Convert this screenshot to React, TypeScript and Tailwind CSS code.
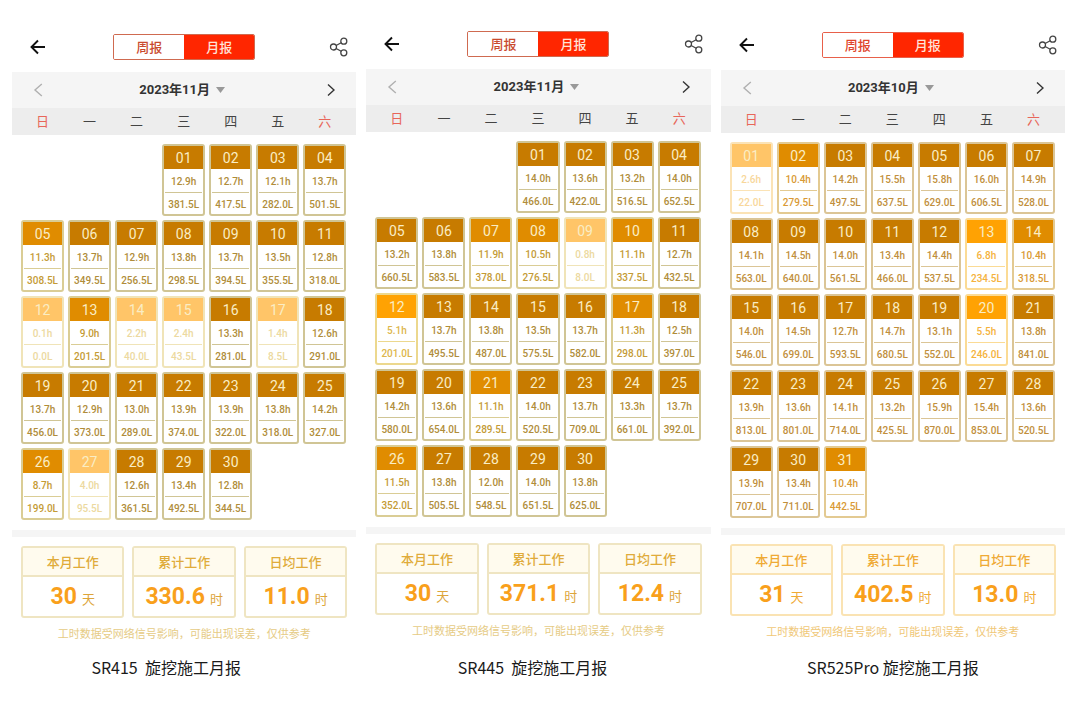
import clsx from 'clsx';

type Tone = 'olive' | 'amber';

interface DayRecord {
  hours: string;
  fuel: string;
}

interface Report {
  id: string;
  month: string;
  firstWeekday: number;
  days: DayRecord[];
  totals: { label: string; value: string; unit: string }[];
  caption: string;
  tone: Tone;
  topClass: string;
  captionClass: string;
}

const WEEKDAYS = ['日', '一', '二', '三', '四', '五', '六'];

// "hours/litres" per day, in calendar order
function parseDays(source: string): DayRecord[] {
  return source
    .trim()
    .split(/\s+/)
    .map((entry) => {
      const [hours, fuel] = entry.split('/');
      return { hours, fuel };
    });
}

function getTotals(days: string, total: string, average: string) {
  return [
    { label: '本月工作', value: days, unit: '天' },
    { label: '累计工作', value: total, unit: '时' },
    { label: '日均工作', value: average, unit: '时' },
  ];
}

const REPORTS: Report[] = [
  {
    id: 'sr415',
    month: '2023年11月',
    firstWeekday: 3,
    days: parseDays(`
      12.9/381.5 12.7/417.5 12.1/282.0 13.7/501.5
      11.3/308.5 13.7/349.5 12.9/256.5 13.8/298.5 13.7/394.5 13.5/355.5 12.8/318.0
      0.1/0.0 9.0/201.5 2.2/40.0 2.4/43.5 13.3/281.0 1.4/8.5 12.6/291.0
      13.7/456.0 12.9/373.0 13.0/289.0 13.9/374.0 13.9/322.0 13.8/318.0 14.2/327.0
      8.7/199.0 4.0/95.5 12.6/361.5 13.4/492.5 12.8/344.5
    `),
    totals: getTotals('30', '330.6', '11.0'),
    caption: 'SR415  旋挖施工月报',
    tone: 'olive',
    topClass: 'pt-[34px]',
    captionClass: 'pr-9',
  },
  {
    id: 'sr445',
    month: '2023年11月',
    firstWeekday: 3,
    days: parseDays(`
      14.0/466.0 13.6/422.0 13.2/516.5 14.0/652.5
      13.2/660.5 13.8/583.5 11.9/378.0 10.5/276.5 0.8/8.0 11.1/337.5 12.7/432.5
      5.1/201.0 13.7/495.5 13.8/487.0 13.5/575.5 13.7/582.0 11.3/298.0 12.5/397.0
      14.2/580.0 13.6/654.0 11.1/289.5 14.0/520.5 13.7/709.0 13.3/661.0 13.7/392.0
      11.5/352.0 13.8/505.5 12.0/548.5 14.0/651.5 13.8/625.0
    `),
    totals: getTotals('30', '371.1', '12.4'),
    caption: 'SR445  旋挖施工月报',
    tone: 'olive',
    topClass: 'pt-[31px]',
    captionClass: 'pr-3',
  },
  {
    id: 'sr525pro',
    month: '2023年10月',
    firstWeekday: 0,
    days: parseDays(`
      2.6/22.0 10.4/279.5 14.2/497.5 15.5/637.5 15.8/629.0 16.0/606.5 14.9/528.0
      14.1/563.0 14.5/640.0 14.0/561.5 13.4/466.0 14.4/537.5 6.8/234.5 10.4/318.5
      14.0/546.0 14.5/699.0 12.7/593.5 14.7/680.5 13.1/552.0 5.5/246.0 13.8/841.0
      13.9/813.0 13.6/801.0 14.1/714.0 13.2/425.5 15.9/870.0 15.4/853.0 13.6/520.5
      13.9/707.0 13.4/711.0 10.4/442.5
    `),
    totals: getTotals('31', '402.5', '13.0'),
    caption: 'SR525Pro 旋挖施工月报',
    tone: 'amber',
    topClass: 'pt-8',
    captionClass: '',
  },
];

function getHeadColor(hours: number): string {
  if (hours <= 4) return 'bg-[#ffc568]';
  if (hours < 8) return 'bg-[#ffa203]';
  if (hours < 12) return 'bg-[#e08c00]';
  return 'bg-[#c77b00]';
}

function getBodyColor(hours: number, tone: Tone): string {
  if (tone === 'amber') {
    if (hours <= 4) return 'border-[#fbe3b6] text-[#f8d79b]';
    if (hours < 8) return 'border-[#fbdb95] text-[#f5b23c]';
    if (hours < 12) return 'border-[#e3ca92] text-[#d99a35]';
    return 'border-[#dbc596] text-[#c18f3c]';
  }
  if (hours <= 4) return 'border-[#f0e4b8] text-[#ecd9a0]';
  if (hours < 8) return 'border-[#ecd88e] text-[#ddb64c]';
  if (hours < 12) return 'border-[#dacd95] text-[#c49b36]';
  return 'border-[#d0c595] text-[#b08d3a]';
}

function DayCell({ day, record, tone }: { day: number; record: DayRecord; tone: Tone }) {
  const hours = Number(record.hours);

  return (
    <div
      className={clsx(
        'flex h-[72px] flex-col rounded-[3px] border-2 text-center font-[Roboto,sans-serif] text-[10px] font-medium',
        getBodyColor(hours, tone),
      )}
    >
      <div
        className={clsx(
          'flex h-[23px] items-center justify-center pt-px text-sm font-normal text-[#faedc4]',
          getHeadColor(hours),
        )}
      >
        {String(day).padStart(2, '0')}
      </div>
      <div className="mx-px flex h-6 items-center justify-center border-b border-inherit pt-[2px]">
        {record.hours}h
      </div>
      <div className="flex flex-1 items-center justify-center pt-[2px]">{record.fuel}L</div>
    </div>
  );
}

function TopBar({ tone }: { tone: Tone }) {
  return (
    <header className="grid grid-cols-[1fr_auto_1fr] items-center px-2">
      <button type="button" aria-label="返回" className="justify-self-start pl-[9px] text-[#111]">
        <svg width="17" height="18" viewBox="0 0 17 18" fill="none" stroke="currentColor" strokeWidth="1.9">
          <path d="M9 2.5 2.5 9 9 15.5M2.5 9H16" />
        </svg>
      </button>
      <div
        className={clsx(
          'flex h-[26px] w-[142px] overflow-hidden rounded-[2px] border text-[13px]',
          tone === 'amber' ? 'border-[#e8604a]' : 'border-[#cf6a50]',
        )}
      >
        <button
          type="button"
          className={clsx('flex-1 bg-white font-medium', tone === 'amber' ? 'text-[#e0452c]' : 'text-[#c94a2e]')}
        >
          周报
        </button>
        <button type="button" className="flex-1 bg-[#ff2600] font-medium text-[#ffe3d8]">
          月报
        </button>
      </div>
      <button type="button" aria-label="分享" className="justify-self-end text-[#444]">
        <svg width="19" height="20" viewBox="0 0 19 20" fill="none" stroke="currentColor" strokeWidth="1.3">
          <circle cx="4.5" cy="10" r="3" />
          <circle cx="14.8" cy="4.2" r="3" />
          <circle cx="14.8" cy="15.8" r="3" />
          <path d="m7.1 8.5 5.1-2.8M7.1 11.5l5.1 2.8" />
        </svg>
      </button>
    </header>
  );
}

function MonthBar({ month }: { month: string }) {
  return (
    <div className="mt-3 flex h-9 items-center justify-between bg-[#f5f5f5] px-[21px]">
      <button type="button" aria-label="上个月" className="text-[#b0b0b0]">
        <svg width="10" height="14" viewBox="0 0 10 14" fill="none" stroke="currentColor" strokeWidth="1.4">
          <path d="M8.8 1 2 7l6.8 6" />
        </svg>
      </button>
      <button
        type="button"
        className="flex items-center gap-[6px] pr-1 font-[Roboto,'Noto_Sans_CJK_SC',sans-serif] text-[13px] font-bold text-[#333]"
      >
        {month}
        <svg width="9" height="6" viewBox="0 0 9 6" fill="#999">
          <path d="M0 0h9L4.5 6z" />
        </svg>
      </button>
      <button type="button" aria-label="下个月" className="text-[#333]">
        <svg width="10" height="14" viewBox="0 0 10 14" fill="none" stroke="currentColor" strokeWidth="1.4">
          <path d="m3 1.5 6 5.5-6 5.5" />
        </svg>
      </button>
    </div>
  );
}

function TotalCard({ label, value, unit, tone }: Report['totals'][number] & { tone: Tone }) {
  const border = tone === 'amber' ? 'border-[#fae3b3]' : 'border-[#efe5c2]';

  return (
    <div className={clsx('flex h-[72px] flex-col rounded-[3px] border-2', border)}>
      <div
        className={clsx(
          'flex h-[29px] shrink-0 items-center justify-center border-b-2 bg-[#fffbee] text-[13px] font-medium',
          border,
          tone === 'amber' ? 'text-[#efaa35]' : 'text-[#e0ab3a]',
        )}
      >
        {label}
      </div>
      <div className="flex flex-1 items-baseline justify-center gap-[5px] pt-[2px] leading-[36px]">
        <span className="font-[Roboto,sans-serif] text-[23px] font-bold text-[#f9a01b]">{value}</span>
        <span className={clsx('text-[13px]', tone === 'amber' ? 'text-[#efaa35]' : 'text-[#dda53a]')}>{unit}</span>
      </div>
    </div>
  );
}

function ReportPanel({ report }: { report: Report }) {
  const { tone } = report;

  return (
    <section className={clsx('flex flex-col', report.topClass)}>
      <TopBar tone={tone} />
      <MonthBar month={report.month} />

      <div className="grid h-[27px] grid-cols-7 items-center gap-x-1 bg-[#ededed] pr-[10px] pb-[2px] pl-[9px] text-center text-[13px] text-[#444]">
        {WEEKDAYS.map((name, i) => (
          <span key={name} className={i === 0 || i === 6 ? 'text-[#e8665a]' : undefined}>
            {name}
          </span>
        ))}
      </div>

      <div className="mt-[9px] grid grid-cols-7 gap-1 pr-[10px] pl-[9px]">
        {report.firstWeekday > 0 && <div className="col-span-3" />}
        {report.days.map((record, i) => (
          <DayCell key={i} day={i + 1} record={record} tone={tone} />
        ))}
      </div>

      <div className="mt-[10px] h-[7px] bg-[#f5f5f5]" />

      <div className="mt-[9px] grid grid-cols-3 gap-2 px-[9px]">
        {report.totals.map((total) => (
          <TotalCard key={total.label} {...total} tone={tone} />
        ))}
      </div>

      <p
        className={clsx(
          'mt-[6px] text-center text-[11px] leading-[18px]',
          tone === 'amber' ? 'text-[#f0c878]' : 'text-[#e6cb85]',
        )}
      >
        工时数据受网络信号影响，可能出现误差，仅供参考
      </p>

      <h2
        className={clsx(
          'mt-auto pt-3 text-center text-base leading-6 whitespace-pre text-[#1a1a1a]',
          report.captionClass,
        )}
      >
        {report.caption}
      </h2>
    </section>
  );
}

export default function App() {
  return (
    <main className="grid min-h-screen grid-cols-3 gap-[10px] bg-white pr-[15px] pb-[22px] pl-3 font-['Noto_Sans_CJK_SC',sans-serif]">
      {REPORTS.map((report) => (
        <ReportPanel key={report.id} report={report} />
      ))}
    </main>
  );
}
